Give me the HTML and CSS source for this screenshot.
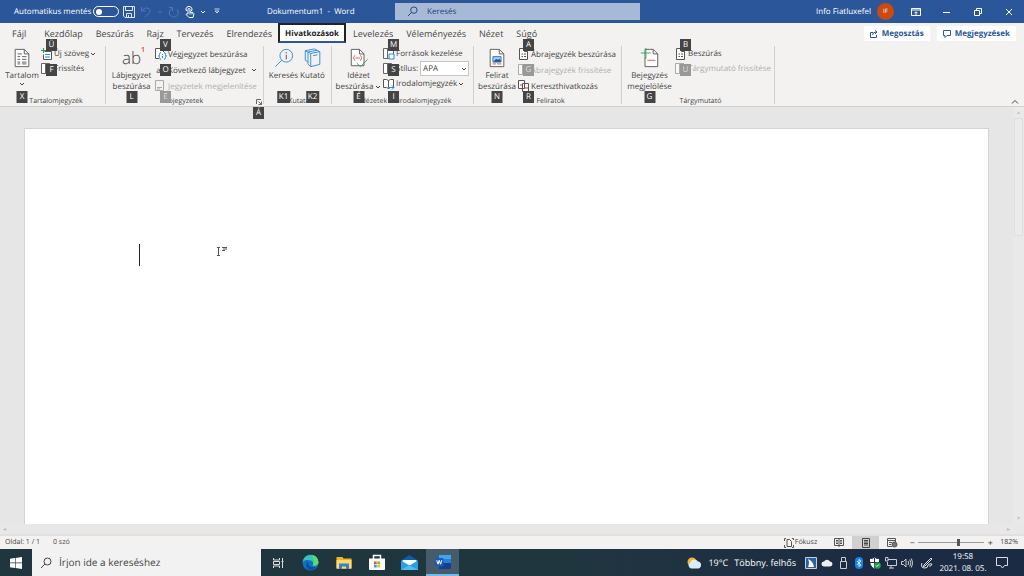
FILE: index.html
```html
<!DOCTYPE html>
<html lang="hu">
<head>
<meta charset="utf-8">
<title>Dokumentum1 - Word</title>
<link rel="stylesheet" href="styles.css">
</head>
<body>
<svg class="defs" aria-hidden="true">
  <symbol id="chev" viewBox="0 0 6 6"><path d="M1 2l2 2 2-2" fill="none" stroke="currentColor"/></symbol>
  <symbol id="glass" viewBox="0 0 12 12"><circle cx="7.500" cy="4.500" r="3.500" fill="none" stroke="currentColor"/><path d="M5 7L1 11" stroke="currentColor"/></symbol>
  <symbol id="page" viewBox="0 0 12 12"><path d="M1.500.5h5l3 3v8h-8z" fill="#fff" stroke="#555"/><path d="M6.500.5v3h3M3.500 6h1.500M3.500 8.500h1.500M6 6h2M6 8.500h2" fill="none" stroke="#555"/></symbol>
  <symbol id="pages" viewBox="0 0 12 12"><path d="M.5.5h4v10h-4zM4.500.5h4l2 2v8h-6z" fill="#fff" stroke="#666"/><path d="M8.500.5v2h2" fill="none" stroke="#666"/></symbol>
</svg>
<div class="window">
  <header class="titlebar">
    <label class="autosave">Automatikus mentés <input type="checkbox" class="switch"></label>
    <div class="quick">
      <button aria-label="Mentés"><svg width="12" height="12" viewBox="0 0 12 12" fill="none" stroke="#dfe7f3"><path d="M.5.5h11v11H2L.5 10zM2.500.5v4h7v-4M3.500 11V7.500h5V11M5.500 9v2"/></svg></button>
      <button class="dim" aria-label="Visszavonás"><svg width="12" height="12" viewBox="0 0 12 12" fill="none" stroke="currentColor"><path d="M1.500 1v4h4M1.500 5C4 1 10 1 10 5c0 3-3 3-5 6"/></svg></button>
      <svg class="dim" width="6" height="6"><use href="#chev"/></svg>
      <button class="dim" aria-label="Ismétlés"><svg width="12" height="12" viewBox="0 0 12 12" fill="none" stroke="currentColor"><path d="M4 2.500a4.500 4.500 0 1 0 5 1M1 1.500h3.500V5"/></svg></button>
      <button class="touch" aria-label="Érintéses mód"><svg width="10" height="12" viewBox="0 0 10 12" fill="none" stroke="#fff"><path d="M1.500 5a3 3 0 1 1 5 0M3 8V3.500a1 1 0 0 1 2 0V6l3 .5q1 .5.8 2L8 11.500H4L1 8.500q1-1.500 2-.5M5 6v2.500M7 6.500v2"/></svg></button>
      <svg width="6" height="6"><use href="#chev"/></svg>
      <button class="more" aria-label="Testreszabás"><svg width="6" height="7" viewBox="0 0 6 7" fill="none" stroke="#c5d3e8"><path d="M.5 1h5M1 3l2 2 2-2z"/></svg></button>
    </div>
    <div class="doc-title">Dokumentum1&nbsp; -&nbsp; Word</div>
    <label class="search"><svg width="11" height="11"><use href="#glass"/></svg><input type="text" placeholder="Keresés" aria-label="Keresés"></label>
    <div class="account">Info Fiatluxefel <span class="avatar">IF</span></div>
    <div class="controls">
      <button aria-label="Menüszalag"><svg width="10" height="8" viewBox="0 0 10 8" fill="none" stroke="#fff"><path d="M.5.5h9v7h-9zM.5 2h9M5 7V4M3.500 5.200L5 3.700l1.500 1.500"/></svg></button>
      <button aria-label="Kis méret"><svg width="8" height="8" stroke="#fff"><path d="M0 4.500h7"/></svg></button>
      <button aria-label="Előző méret"><svg width="8" height="8" fill="none" stroke="#fff"><path d="M.5 2.500h5v5h-5zM2.500 2V.5h5v5H6"/></svg></button>
      <button aria-label="Bezárás"><svg width="8" height="8" stroke="#fff"><path d="M1 1l6 6M7 1L1 7"/></svg></button>
    </div>
  </header>

  <nav class="tabs">
    <button class="file">Fájl</button><button>Kezdőlap</button><button>Beszúrás</button><button>Rajz</button><button>Tervezés</button><button>Elrendezés</button><button class="active">Hivatkozások</button><button>Levelezés</button><button>Véleményezés</button><button>Nézet</button><button>Súgó</button>
    <div class="share">
      <button><svg width="8" height="8" viewBox="0 0 8 8" fill="none" stroke="currentColor"><path d="M3 2.500H.5v5h6V5M2.500 5q0-3 4-3M5 .5L7 2 5 4"/></svg>Megosztás</button>
      <button><svg width="8" height="8" viewBox="0 0 8 8" fill="none" stroke="currentColor"><path d="M.5.5h7v5H4l-2 2v-2H.5z"/></svg>Megjegyzések</button>
    </div>
  </nav>

  <section class="ribbon">
    <div class="group g-toc">
      <div class="body">
        <button class="big"><svg width="16" height="22" viewBox="0 0 16 22" fill="none" stroke="#555"><path d="M.5 1.500h10l5 5v14H.5z" fill="#fff"/><path d="M10.500 1.500v5h5M3 6.500h5M3 9.500h3M8 9.500h5M3 12.500h3M8 12.500h5M3 15.500h3M8 15.500h5M3 17.500h3M8 17.500h5"/></svg>Tartalom<svg width="6" height="6"><use href="#chev"/></svg><kbd>X</kbd></button>
        <div class="list tight">
          <button><svg width="12" height="12" viewBox="0 0 12 12" fill="none"><path d="M3.500 3.500h7v8h-8v-5" stroke="#555" fill="#fff"/><path d="M4 6.500h5M4 9h5" stroke="#2b88d8"/><path d="M0 2.500h5M2.500 0v5" stroke="#20a050"/></svg>Új szöveg<svg width="6" height="6"><use href="#chev"/></svg></button>
          <button><svg width="12" height="12"><use href="#pages"/></svg>Frissítés</button>
          <kbd class="top">Ü</kbd><kbd class="mid">F</kbd>
        </div>
      </div>
      <div class="caption">Tartalomjegyzék</div>
    </div>
    <div class="group g-notes">
      <div class="body">
        <button class="big"><span class="ab">ab<sup>1</sup></span>Lábjegyzet<br>beszúrása<kbd>L</kbd></button>
        <div class="list">
          <button><svg width="12" height="12" viewBox="0 0 12 12" fill="none"><path d="M4 10.500H.5V.5h6l2 2V4" stroke="#555" fill="#fff"/><path d="M6 4.500q-1.500 0-1.500 2T3.500 8q1 0 1 1.500T6 11.500M9 4.500q1.500 0 1.500 2t1 1.500q-1 0-1 1.500T9 11.500M7.500 6v1M7.500 8v2" stroke="#2b88d8"/></svg>Végjegyzet beszúrása</button>
          <button><span class="ab-mini">ab</span>Következő lábjegyzet<svg class="gap" width="6" height="6"><use href="#chev"/></svg></button>
          <button disabled><svg width="12" height="12" viewBox="0 0 12 12" fill="none" stroke="#aaa"><path d="M.5.5h8v10h-8zM2 7.500h5M2 9h3"/></svg>Jegyzetek megjelenítése</button>
          <kbd class="top">V</kbd><kbd class="mid">O</kbd><kbd class="bot faded">E</kbd>
        </div>
      </div>
      <div class="caption">Lábjegyzetek</div>
      <button class="launcher" aria-label="Lábjegyzetek beállításai"><svg width="6" height="6" viewBox="0 0 6 6" fill="none" stroke="#666"><path d="M.5 5V.5H5M2.500 2.500l3 3M5.500 2.500v3h-3"/></svg><kbd>Á</kbd></button>
    </div>
    <div class="group g-research">
      <div class="body">
        <button class="big"><svg width="20" height="22" viewBox="0 0 20 22" fill="none"><circle cx="12.500" cy="8.500" r="7" stroke="#2b88d8"/><path d="M7.500 13.500L.5 20.500" stroke="#2b88d8"/><path d="M12.500 7.500v5M12.500 4.500v1.500" stroke="#444"/></svg>Keresés<kbd>K1</kbd></button>
        <button class="big"><svg width="18" height="22" viewBox="0 0 18 22" fill="none" stroke="#2b88d8"><path d="M6.500 6l10-2v14l-10 2.500zM6.500 6l-3-1.500v13l3 3M3.500 4.500l10-2 3 1.500M3.500 15.500l-3-2V3l10-2 3 1.500M.5 3l3 1.500M9 8.500l5-1"/></svg>Kutató<kbd>K2</kbd></button>
      </div>
      <div class="caption">Kutatás</div>
    </div>
    <div class="group g-cite">
      <div class="body">
        <button class="big"><svg width="20" height="22" viewBox="0 0 20 22" fill="none"><path d="M1.500 1.500h9l5 5v13h-14z" fill="#fff" stroke="#555"/><path d="M10.500 1.500v5h5" stroke="#555"/><path d="M5.500 8q-3 2.500 0 6M11.500 8q3 2.500 0 6M6 11h5" stroke="#e84a4a"/><path d="M7.500 16.500l4 4 8-8" stroke="#28a060"/></svg>Idézet<br><span>beszúrása <svg width="6" height="6"><use href="#chev"/></svg></span><kbd>É</kbd></button>
        <div class="list tight">
          <button><svg width="12" height="12" viewBox="0 0 12 12"><use href="#pages"/><path d="M6 6h5v5H6z" fill="#fff" stroke="#2b88d8"/></svg>Források kezelése</button>
          <div class="style-row"><svg width="12" height="12" viewBox="0 0 12 12"><use href="#pages"/><path d="M5 11l5-4 2 3-4 2z" fill="#2b88d8"/></svg><label for="cite-style">Stílus:</label><span class="pick"><select id="cite-style"><option>APA</option></select><svg width="6" height="6"><use href="#chev"/></svg></span></div>
          <button><svg width="12" height="12" viewBox="0 0 12 12"><path d="M.5 1.500h3l2 1 2-1h3v8h-3l-2 1-2-1h-3zM5.500 2.500v8" fill="#fff" stroke="#555"/><path d="M5 9.500h6M9 7.500l2 2-2 2" fill="none" stroke="#2b88d8"/></svg>Irodalomjegyzék<svg width="6" height="6"><use href="#chev"/></svg></button>
          <kbd class="top">M</kbd><kbd class="mid">S</kbd><kbd class="bot">I</kbd>
        </div>
      </div>
      <div class="caption">Idézetek és irodalomjegyzék</div>
    </div>
    <div class="group g-captions">
      <div class="body">
        <button class="big"><svg width="16" height="22" viewBox="0 0 16 22" fill="none"><path d="M.5 1.500h10l5 5v14H.5z" fill="#fff" stroke="#555"/><path d="M10.500 1.500v5h5" stroke="#555"/><path d="M3.500 9.500h9v6h-9z" fill="#a8cdf0" stroke="#2b70b8"/><path d="M4 15l3-3 2 1 2-1 1.500 3z" fill="#174f90"/><path d="M3 17.500h4M8 17.500h5" stroke="#e84a4a"/></svg>Felirat<br>beszúrása<kbd>N</kbd></button>
        <div class="list">
          <button><svg width="12" height="12"><use href="#page"/></svg>Ábrajegyzék beszúrása</button>
          <button disabled><svg width="12" height="12" opacity=".5"><use href="#pages"/></svg>Ábrajegyzék frissítése</button>
          <button><svg width="12" height="12" viewBox="0 0 12 12" fill="none"><path d="M.5.5h6v8h-6zM4.500 3.500h6v8h-6z" fill="#fff" stroke="#555"/><path d="M2 5h3M6 8h4" stroke="#e02020"/></svg>Kereszthivatkozás</button>
          <kbd class="top">A</kbd><kbd class="mid faded">G</kbd><kbd class="bot">R</kbd>
        </div>
      </div>
      <div class="caption">Feliratok</div>
    </div>
    <div class="group g-index">
      <div class="body">
        <button class="big"><svg width="20" height="22" viewBox="0 0 20 22" fill="none"><path d="M4.500 1.500h9l5 5v14h-14z" fill="#fff" stroke="#555"/><path d="M13.500 1.500v5h5" stroke="#555"/><path d="M7 13.500h9" stroke="#e84a4a"/><path d="M5.500 0v12M0 5.500h11" stroke="#28a850"/></svg>Bejegyzés<br>megjelölése<kbd>G</kbd></button>
        <div class="list tight">
          <button><svg width="12" height="12"><use href="#page"/></svg>Beszúrás</button>
          <button disabled><svg width="12" height="12" opacity=".5"><use href="#pages"/></svg>Tárgymutató frissítése</button>
          <kbd class="top">B</kbd><kbd class="mid faded">U</kbd>
        </div>
      </div>
      <div class="caption">Tárgymutató</div>
    </div>
    <button class="collapse" aria-label="Összecsukás"><svg width="8" height="6" viewBox="0 0 8 6" fill="none" stroke="#444"><path d="M1 4.500l3-3 3 3"/></svg></button>
  </section>

  <main class="workspace">
    <div class="canvas">
      <article class="paper">
        <span class="caret"></span>
        <svg class="pointer" width="12" height="11" viewBox="0 0 12 11" fill="none" stroke="#555"><path d="M1 1.500h3M1 9.500h3M2.500 1.500v8M6 1.500h5M7 3h4M6 4.500h3"/></svg>
      </article>
    </div>
    <div class="vscroll"><span>▴</span><i></i><span>▾</span></div>
  </main>
  <div class="hscroll"><span>◂</span><span>▸</span></div>

  <footer class="status">
    <span class="pages">Oldal: 1 / 1</span><span>0 szó</span>
    <button class="focus"><svg width="10" height="10" viewBox="0 0 10 10" fill="none" stroke="#555"><path d="M.5 3V.5H2M.5 7v2.500H2M8 .5h1.500V2M9.500 7v2.500H8M3 1.500h2.500l2 2v5H3z"/></svg>Fókusz</button>
    <button class="view" aria-label="Olvasás"><svg width="10" height="9" viewBox="0 0 10 9" fill="none" stroke="#555"><path d="M.5.5h9v7h-9zM5 0v9M2 2.500h2M2 4h2M2 5.500h2M6 2.500h2M6 4h2M6 5.500h2"/></svg></button>
    <button class="view on" aria-label="Nyomtatási elrendezés"><svg width="8" height="10" viewBox="0 0 8 10" fill="none" stroke="#444"><path d="M.5.5h7v9h-7zM2 2.500h4M2 4h4M2 5.500h4M2 7h4"/></svg></button>
    <button class="view" aria-label="Webes elrendezés"><svg width="11" height="10" viewBox="0 0 11 10" fill="none" stroke="#555"><path d="M5 8.500H.5v-8h8V4M1 2.500h7M2 4.500h3M2 6.500h2"/><circle cx="7.500" cy="6.500" r="2.500" fill="#777"/></svg></button>
    <button class="step" aria-label="Kicsinyítés">−</button>
    <input class="zoom" type="range" min="0" max="100" value="61" aria-label="Nagyítás">
    <button class="step" aria-label="Nagyítás">+</button>
    <span class="percent">182%</span>
  </footer>
</div>

<footer class="taskbar">
  <button class="start" aria-label="Start"><svg width="12" height="12" viewBox="0 0 12 12" fill="#fff"><path d="M0 1.700L5 1v4.600H0zM5.600.9L12 0v5.600H5.600zM0 6.300h5V11l-5-.7zM5.600 6.300H12V12l-6.400-.9z"/></svg></button>
  <label class="task-search"><svg width="12" height="12"><use href="#glass"/></svg><input type="text" placeholder="Írjon ide a kereséshez" aria-label="Keresés a gépen"></label>
  <button class="app" aria-label="Feladatnézet"><svg width="12" height="12" viewBox="0 0 12 12" fill="none" stroke="#ddd"><path d="M1.500 1v2h6V1M1.500 4.500h6v3h-6zM1.500 11V9h6v2M10.500 1v10M9.500 4.500h2"/></svg></button>
  <button class="app" aria-label="Edge"><svg width="17" height="17" viewBox="0 0 17 17"><circle cx="8.500" cy="8.500" r="8" fill="#0f72c4"/><path d="M.6 8A8 8 0 0 1 16.500 8c0 3-3 4.500-6 3.500 1-1 1-4-1.500-5S2.500 5.500.6 8z" fill="#35c6b8"/><path d="M10 1a8 8 0 0 1 6.500 7c0 3-3 4-5.500 3.500C13 8 12 4 10 1z" fill="#62d96b"/><path d="M6.500 7.500c-1 4 2 6.500 7.500 5.500-2 3-6 3.500-8 2S3 9 6.500 7.500z" fill="#0b4f9c"/></svg></button>
  <button class="app" aria-label="Fájlkezelő"><svg width="16" height="14" viewBox="0 0 16 14"><path d="M.5 1h6l1 1.500h8V13H.5z" fill="#f0b429"/><path d="M.5 4h15v8H.5z" fill="#ffd866"/><path d="M3 13V7.500h10V13h-3v-2.500H6V13z" fill="#2f84d8"/></svg></button>
  <button class="app" aria-label="Áruház"><svg width="16" height="17" viewBox="0 0 16 17"><path d="M4.500 5V1.500h7V5" fill="none" stroke="#fff" stroke-width="1.500"/><path d="M0 4.500h16V15q0 1-1 1H1q-1 0-1-1z" fill="#fff"/><path d="M5 7.500h2.700v2.700H5z" fill="#e94f2e"/><path d="M8.300 7.500H11v2.700H8.300z" fill="#7cba1e"/><path d="M5 10.800h2.700v2.700H5z" fill="#2aa1e8"/><path d="M8.300 10.800H11v2.700H8.300z" fill="#fbba16"/></svg></button>
  <button class="app" aria-label="Levelezés"><svg width="17" height="15" viewBox="0 0 17 15"><path d="M0 5.500L8.500 0 17 5.500V15H0z" fill="#0c5da8"/><path d="M1.500 5h14v6h-14z" fill="#fff"/><path d="M0 5.500l8.500 5 8.500-5V15H0z" fill="#28a0e8"/><path d="M0 15l8.500-5 8.500 5z" fill="#50bdf5"/></svg></button>
  <button class="app current" aria-label="Word"><svg width="16" height="14" viewBox="0 0 16 14"><path d="M4 0h12v14H4z" fill="#2b7cd3"/><path d="M4 0h12v4H4z" fill="#41a5ee"/><path d="M4 8h12v6H4z" fill="#173f8c"/><rect y="3" width="8.500" height="8.500" rx="1" fill="#185abd"/><path d="M1.700 5.200l1.300 4 1.200-4 1.300 4 1.300-4" fill="none" stroke="#fff"/></svg></button>
  <div class="weather"><svg width="15" height="12" viewBox="0 0 15 12"><circle cx="5" cy="5" r="4.500" fill="#fbb034"/><path d="M4 11.500a3 3 0 0 1-1-5.500 4.500 4.500 0 0 1 8-1.500 3.600 3.600 0 0 1 .5 7z" fill="#d8ecfa"/></svg><span>19°C</span><span>Többny. felhős</span></div>
  <div class="tray">
    <svg width="12" height="12" viewBox="0 0 12 12"><path d="M.5.5h11v11H.5z" fill="#2b5f9e" stroke="#ccd"/><path d="M3 2q5 2 6 8H3q2-4 0-8z" fill="#fff"/></svg>
    <svg width="12" height="12" viewBox="0 0 12 12"><path d="M3 9.500a2.500 2.500 0 0 1 0-5 3.500 3.500 0 0 1 6 0 2.500 2.500 0 0 1 0 5z" fill="#eee"/></svg>
    <svg width="12" height="12" viewBox="0 0 12 12" fill="none" stroke="#ccc"><path d="M4.500 4V.5h4V4M3.500 4.500h6v7h-6z"/></svg>
    <svg width="12" height="12" viewBox="0 0 12 12"><rect x="2" width="8" height="12" rx="4" fill="#1484e8"/><path d="M4 4l4 4-2 1.500v-7L8 4 4 8" fill="none" stroke="#fff" stroke-width=".8"/></svg>
    <svg width="12" height="12" viewBox="0 0 12 12"><path d="M1 2q3 0 4.500-1.500Q7 2 10 2q.5 7-4.500 9.500Q.5 9 1 2z" fill="#fff"/><path d="M5.500 1v10M1 5.500h9" stroke="#20344e"/><circle cx="8.500" cy="8.500" r="3.300" fill="#1fa04a"/><path d="M7 8.500l1 1 2-2" stroke="#fff" fill="none"/></svg>
    <svg width="12" height="12" viewBox="0 0 12 12" fill="none" stroke="#ccc"><path d="M3 2.500h8.500v6H2.500V5M6 11.500V9M4 11h5M.5.5H3V4H.5z"/></svg>
    <svg width="12" height="12" viewBox="0 0 12 12" fill="none" stroke="#ccc"><path d="M.5 4.500h2L5 2v8L2.500 7.500h-2zM7 4q1.500 2 0 4M8.700 2.500q2.500 3.500 0 7M10.300 1.500q3 4.500 0 9"/></svg>
    <svg class="pen" width="12" height="12" viewBox="0 0 12 12" fill="none" stroke="#ddd"><path d="M3 8l7-7 1 1-7 7-2 .5zM1 6q-2 5 3 5 3 0 3-3 2-2 4-1-1 3-3 2"/></svg>
  </div>
  <div class="clock"><span>19:58</span><span>2021. 08. 05.</span></div>
  <button class="notice" aria-label="Értesítések"><svg width="12" height="12" viewBox="0 0 12 12" fill="none" stroke="#ddd"><path d="M.5.5h11v8h-3l-2 2.500-2-2.500h-4z"/></svg></button>
</footer>
</body>
</html>
```
FILE: styles.css
```css
* { box-sizing: border-box; }
html, body { height: 100%; }
body {
  margin: 0;
  display: flex;
  flex-direction: column;
  overflow: hidden;
  font: 8px/11px "Open Sans", "Noto Sans", sans-serif;
  text-rendering: geometricPrecision;
  color: #444;
  background: #e6e6e6;
  white-space: nowrap;
}
button, input, select { font: inherit; color: inherit; border: 0; padding: 0; margin: 0; background: none; text-rendering: inherit; }
button { display: flex; align-items: center; justify-content: center; }
svg { flex: none; }
.defs { position: absolute; width: 0; height: 0; }
.window { flex: 1; min-height: 0; display: flex; flex-direction: column; }

.titlebar { display: flex; align-items: center; height: 23px; background: #2b579a; color: #fff; padding-left: 14px; position: relative; }
.autosave { display: flex; align-items: center; gap: 2px; width: 109px; }
.switch { appearance: none; width: 26px; height: 11px; border: 1px solid #fff; border-radius: 6px; display: flex; align-items: center; padding-left: 2px; }
.switch::before { content: ""; width: 6px; height: 6px; border-radius: 50%; background: #fff; }
.quick { display: flex; align-items: center; gap: 5px; width: 144px; }
.quick .dim { color: #5078b4; }
.quick .more { margin-left: 3px; }
.doc-title { width: 128px; }
.search { display: flex; align-items: center; flex: 0 1 245px; gap: 9px; height: 17px; padding-left: 12px; background: #a6b9d5; color: #1f3f75; }
.search input { flex: 1; min-width: 0; }
input::placeholder { color: inherit; opacity: 1; }
.account { display: flex; align-items: center; gap: 6px; margin-left: auto; }
.avatar { width: 17px; height: 17px; border-radius: 50%; background: #ca4a10; font-size: 6px; line-height: 17px; text-align: center; }
.controls { display: flex; margin-left: 6px; }
.controls button { width: 31px; height: 23px; }

.tabs { display: flex; height: 20px; padding-left: 5px; background: #f3f2f1; font-size: 9px; }
.tabs > button { padding: 0 6px 0 7px; }
.tabs > .file { padding-right: 11px; }
.tabs > .active { font-size: 8px; font-weight: 700; color: #222; background: #fff; border: 2px solid #222; border-bottom-color: #2b579a; padding: 0 5px; }
.share { display: flex; gap: 7px; margin: 3px 8px 2px auto; }
.share button { gap: 4px; padding: 0 6px; background: #fff; color: #2b579a; font-size: 8px; font-weight: 700; }

.ribbon { display: flex; height: 64px; padding: 3px 0 0; background: #f3f2f1; border-bottom: 1px solid #d2d0ce; position: relative; z-index: 1; }
.group { position: relative; display: flex; flex-direction: column; justify-content: space-between; }
.group::after { content: ""; position: absolute; right: 0; top: 0; bottom: 2px; width: 1px; background: #d2d0ce; }
.body { display: flex; }
.caption { text-align: center; font-size: 7px; line-height: 8px; }
.g-toc { width: 106px; padding-left: 6px; }
.g-notes { width: 158px; padding-left: 6px; }
.g-notes .caption { padding-right: 12px; }
.g-research { width: 68px; padding-left: 5px; }
.g-cite { width: 142px; padding-left: 5px; }
.g-captions { width: 148px; padding-left: 5px; }
.g-index { width: 153px; padding-left: 4px; }
.big { position: relative; flex-direction: column; justify-content: flex-start; height: 46px; }
.big > svg:first-child { height: 20px; margin: 2px 0; }
.g-toc .big { width: 32px; }
.g-notes .big { width: 39px; }
.g-research .big { width: 29px; }
.g-cite .big { width: 43px; }
.g-captions .big { width: 36px; }
.g-index .big { width: 47px; }
.big span svg { vertical-align: middle; }
.ab { position: relative; height: 24px; font-size: 17px; font-weight: 300; line-height: 24px; }
.ab sup { position: absolute; left: 100%; top: 0; font-size: 7px; font-weight: 600; line-height: 9px; color: #e83030; }
.list { position: relative; display: flex; flex-direction: column; align-items: flex-start; margin-left: 4px; }
.g-cite .list, .g-captions .list, .g-toc .list { margin-left: 3px; }
.g-index .list { margin-left: 2px; }
.list button, .style-row { height: 16px; gap: 1px; }
.tight button, .style-row { height: 15px; }
.list button:disabled { color: #b0aeac; }
.list .gap { margin-left: 4px; }
.ab-mini { width: 12px; }
.style-row { display: flex; align-items: center; }
.pick { position: relative; display: flex; align-items: center; margin-left: 1px; background: #fff; border: 1px solid #c8c6c4; height: 15px; width: 49px; }
.pick select { appearance: none; width: 100%; height: 13px; padding-left: 2px; }
.pick svg { position: absolute; right: 1px; }

kbd { position: absolute; min-width: 11px; height: 12px; padding: 0 2px; background: #444; color: #fff; font: 8px/12px "Open Sans", sans-serif; text-align: center; }
kbd.faded { background: #999; color: #ddd; }
.list kbd { left: 5px; }
.list .top { top: -7px; }
.list .mid { top: 18px; }
.list .bot { top: 45px; }
.big kbd { top: 45px; left: 50%; transform: translateX(-50%); }
.launcher { position: absolute; right: 2px; bottom: 1px; }
.launcher kbd { top: 8px; right: -2px; }
.collapse { margin: auto 5px 1px auto; }

.workspace { flex: 1; min-height: 0; display: flex; }
.canvas { flex: 1; padding: 21px 24px 0; }
.paper { position: relative; height: 100%; background: #fff; border: 1px solid #d4d4d4; border-bottom: 0; padding: 115px 114px; }
.caret { display: block; width: 1px; height: 22px; background: #222; }
.pointer { position: absolute; left: 191px; top: 117px; }
.vscroll { display: flex; flex-direction: column; align-items: center; width: 11px; background: #e9e9e9; color: #c4c4c4; font-size: 6px; }
.vscroll i { width: 9px; height: 118px; border: 1px solid #dedede; background: #ebebeb; }
.vscroll span:last-child { margin-top: auto; }
.hscroll { display: flex; justify-content: space-between; align-items: center; height: 12px; padding: 0 14px 0 3px; border-bottom: 2px solid #e0e0e0; color: #bbb; font-size: 6px; background: #e8e8e8; }

.status { display: flex; align-items: center; height: 13px; padding: 0 6px 0 5px; background: #f3f2f1; font-size: 7px; }
.pages { width: 48px; }
.focus { margin: 0 8px 0 auto; gap: 1px; }
.view { width: 27px; height: 13px; }
.view.on { background: #d2d0ce; }
.step { width: 12px; font-size: 9px; }
.zoom { appearance: none; width: 66px; height: 1px; background: #999; }
.zoom::-webkit-slider-thumb { appearance: none; width: 3px; height: 7px; background: #555; }
.percent { margin-left: 4px; }

.taskbar { display: flex; align-items: center; height: 27px; background: linear-gradient(90deg, #20363f 0, #20363f 55%, #1c2b44 85%); color: #fff; font-size: 9px; }
.taskbar > button { height: 27px; }
.start { width: 32px; }
.task-search { display: flex; align-items: center; gap: 7px; width: 229px; height: 27px; padding-left: 8px; background: #f2f2f2; color: #444; font-size: 10px; }
.task-search input { flex: 1; min-width: 0; }
.app { width: 33px; }
.current { background: #455d6b; border-bottom: 2px solid #76b9ed; }
.weather { display: flex; align-items: center; gap: 6px; margin-left: auto; }
.tray { display: flex; align-items: center; gap: 4px; margin-left: 9px; }
.pen { margin-left: 4px; }
.clock { display: flex; flex-direction: column; align-items: center; width: 46px; margin-left: 7px; font-size: 8px; line-height: 12px; }
.notice { width: 32px; margin-right: 6px; }
```
